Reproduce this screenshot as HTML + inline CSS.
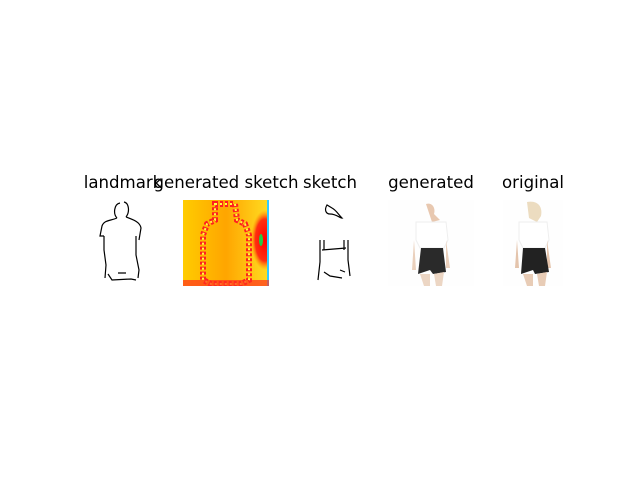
<!DOCTYPE html>
<html><head><style>
body{margin:0;width:640px;height:480px;background:#fff;position:relative;overflow:hidden;font-family:"DejaVu Sans","Liberation Sans",sans-serif}
.t{position:absolute;top:173px;font-size:16.6px;color:#000;white-space:nowrap;transform:translateX(-50%)}
svg{position:absolute}
</style></head><body>
<div class="t" style="left:123px">landmark</div>
<div class="t" style="left:226px">generated sketch</div>
<div class="t" style="left:330px">sketch</div>
<div class="t" style="left:431px">generated</div>
<div class="t" style="left:533px">original</div>

<svg style="left:96px;top:200px" width="52" height="86" viewBox="0 0 52 86" fill="none" stroke="#000" stroke-width="1.2">
<path d="M24 3 C18 4 17 14 21 18 M28 2 C33 3 34 12 30 17"/>
<path d="M21 18 C14 21 8 20 6 26 L4 36 L8 36 M30 17 C38 20 44 22 45 28 L43 40"/>
<path d="M8 36 L8 50 L10 65 L9 78 M40 36 L40 55 L43 70 L42 78"/>
<path d="M12 74 L16 80 L35 79 L40 80 M22 73 L30 73"/>
</svg>

<svg style="left:183px;top:200px" width="86" height="86" viewBox="0 0 86 86">
<defs><linearGradient id="g" x1="0" x2="1"><stop offset="0" stop-color="#ffcc00"/><stop offset=".5" stop-color="#ffa500"/><stop offset="1" stop-color="#ffdd22"/></linearGradient>
<radialGradient id="r" cx=".5" cy=".5" r=".5"><stop offset="0" stop-color="#ff0000"/><stop offset=".7" stop-color="#ff3010"/><stop offset="1" stop-color="#ff8a00" stop-opacity="0"/></radialGradient></defs>
<rect width="86" height="86" fill="url(#g)"/>
<ellipse cx="82" cy="40" rx="14" ry="30" fill="url(#r)"/>
<rect x="84" y="0" width="2" height="86" fill="#33ccff"/>
<path d="M32 4 L52 4 L54 20 L62 24 L66 35 L66 80 L58 84 L28 84 L20 80 L20 35 L24 24 L32 20 Z" fill="none" stroke="#ff2020" stroke-width="6" stroke-dasharray="3 2"/>
<path d="M32 4 L52 4 L54 20 L62 24 L66 35 L66 80 L58 84 L28 84 L20 80 L20 35 L24 24 L32 20 Z" fill="none" stroke="#ffff40" stroke-width="2" stroke-dasharray="2 3"/>
<rect x="0" y="80" width="86" height="6" fill="#ff3020" opacity=".7"/>
<ellipse cx="78" cy="40" rx="2" ry="6" fill="#22cc44"/>
</svg>

<svg style="left:310px;top:200px" width="44" height="86" viewBox="0 0 44 86" fill="none" stroke="#000" stroke-width="1.2">
<path d="M17 5 C14 10 16 14 20 14 C26 14 30 18 32 18 C28 14 26 10 22 8 Z"/>
<path d="M10 40 L10 62 L8 80 M38 40 L38 60 L40 76 M14 40 L14 50 M34 40 L34 50"/>
<path d="M12 50 L36 48 M14 72 L20 76 L32 78 M30 70 L35 72"/>
</svg>

<svg style="left:388px;top:200px" width="86" height="86" viewBox="0 0 86 86">
<rect width="86" height="86" fill="#fefefe"/>
<path d="M38 4 C44 2 48 8 46 14 L52 20 L44 22 Z" fill="#e8c8b0"/>
<path d="M28 22 L58 22 L60 40 L56 48 L32 48 L28 40 Z" fill="#fff" stroke="#eee"/>
<path d="M26 40 L24 70 L28 70 Z M58 40 L62 68 L58 68 Z" fill="#ead0bc"/>
<path d="M33 48 L55 48 L58 72 L45 74 L42 70 L30 74 Z" fill="#2a2a2a"/>
<path d="M32 74 L36 86 L42 86 L42 74 M46 74 L48 86 L54 86 L56 72" fill="#ecd6c4"/>
</svg>

<svg style="left:503px;top:200px" width="60" height="86" viewBox="0 0 60 86">
<rect width="60" height="86" fill="#fefefe"/>
<path d="M24 2 C34 0 40 6 38 16 L34 22 L26 18 Z" fill="#ecdcc0"/>
<path d="M16 22 L44 22 L46 40 L42 48 L20 48 L16 40 Z" fill="#fff" stroke="#eee"/>
<path d="M14 40 L12 68 L16 68 Z M44 40 L48 68 L44 68 Z" fill="#e4c4ac"/>
<path d="M20 48 L42 48 L46 72 L32 74 L30 70 L18 74 Z" fill="#222"/>
<path d="M20 74 L24 86 L30 86 L30 74 M34 74 L36 86 L42 86 L44 72" fill="#e8ccb6"/>
</svg>
</body></html>
